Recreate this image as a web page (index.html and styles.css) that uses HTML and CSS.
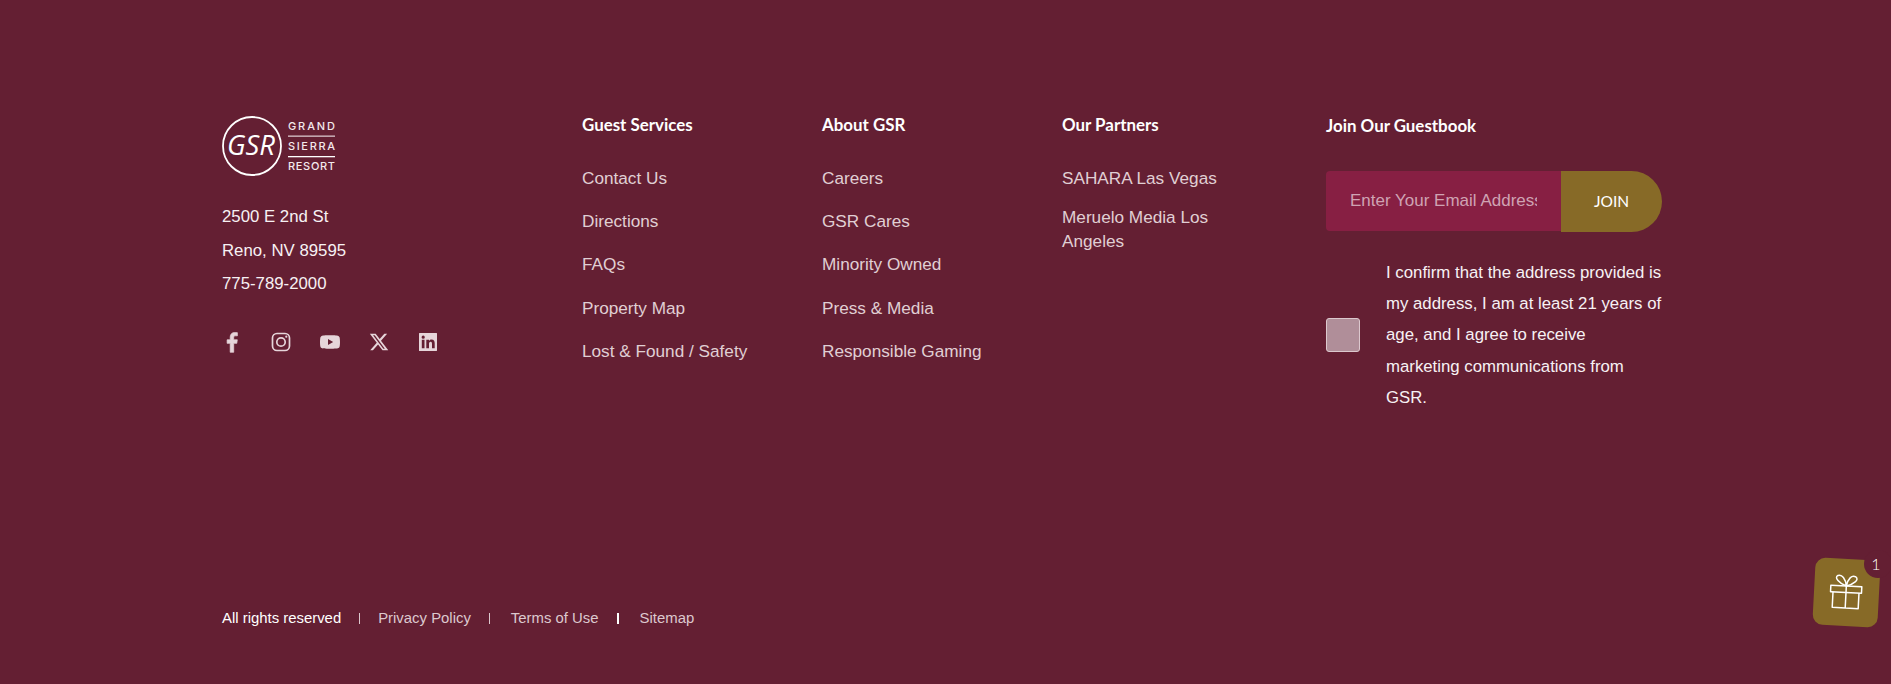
FILE: index.html
```html
<!DOCTYPE html>
<html lang="en">
<head>
<meta charset="utf-8">
<title>GSR Footer</title>
<link rel="stylesheet" href="styles.css">
</head>
<body>
<footer class="footer">
  <div class="main">
    <div class="brand">
      <svg class="logo" width="116" height="60" viewBox="0 0 116 60" role="img" aria-label="Grand Sierra Resort">
        <circle cx="30" cy="30" r="29" fill="none" stroke="#fff" stroke-width="1.800"/>
        <text class="logo-gsr" x="5" y="39" textLength="48" lengthAdjust="spacingAndGlyphs">GSR</text>
        <text class="logo-word" x="66" y="14" textLength="47" lengthAdjust="spacing">GRAND</text>
        <rect x="66" y="19.500" width="47" height="1.300" fill="#d9c5cb"/>
        <text class="logo-word" x="66" y="34" textLength="47" lengthAdjust="spacing">SIERRA</text>
        <rect x="66" y="40" width="47" height="1.300" fill="#fff"/>
        <text class="logo-word" x="66" y="54" textLength="47" lengthAdjust="spacing">RESORT</text>
      </svg>
      <address class="address">
        <p>2500 E 2nd St</p>
        <p>Reno, NV 89595</p>
        <p>775-789-2000</p>
      </address>
      <div class="social">
        <svg class="icon icon-bold" viewBox="-2 -2 28 28"><path d="M14 24V13.6h3.6l.6-4.2H14V6.8c0-1.2.4-2 2.100-2h2.200V1.100C17.900 1 16.600.9 15.200.9c-3.200 0-5.300 1.900-5.300 5.400v3.100H6.300v4.200h3.600V24z"/></svg>
        <svg class="icon" viewBox="0 0 24 24"><rect x="3.500" y="3.500" width="17" height="17" rx="4.500" fill="none" stroke="#e6d5da" stroke-width="1.700"/><circle cx="12" cy="12" r="4.200" fill="none" stroke="#e6d5da" stroke-width="1.700"/><circle cx="17.300" cy="6.700" r="1.100"/></svg>
        <svg class="icon" viewBox="-1.200 -1.200 26.400 26.400"><path d="M22.600 7c-.3-1-1-1.800-2-2C18.800 4.500 12 4.500 12 4.500s-6.800 0-8.600.5c-1 .2-1.700 1-2 2C1 8.800 1 12 1 12s0 3.200.4 5c.3 1 1 1.800 2 2 1.800.5 8.600.5 8.600.5s6.800 0 8.600-.5c1-.2 1.700-1 2-2 .4-1.800.4-5 .4-5s0-3.200-.4-5zM9.800 15.200V8.800l5.700 3.200z" fill-rule="evenodd"/></svg>
        <svg class="icon" viewBox="-2 -2 28 28"><path d="M18.200 2.300h3.300l-7.200 8.200 8.500 11.200h-6.700l-5.200-6.800-6 6.800H1.700l7.700-8.800L1.300 2.300h6.800l4.700 6.200zm-1.200 17.500h1.800L7 4.100H5z"/></svg>
        <svg class="icon" viewBox="0 0 24 24"><path fill-rule="evenodd" d="M3.500 3h17c.3 0 .5.200.5.500v17c0 .3-.2.500-.5.500h-17a.5.500 0 0 1-.5-.5v-17c0-.3.200-.5.500-.5zM5.800 9.800v8.500h2.700V9.800zm1.400-4.200a1.600 1.600 0 1 0 0 3.200 1.600 1.600 0 0 0 0-3.200zm3.100 4.200v8.500H13v-4.300c0-1.100.3-2.200 1.600-2.200s1.400 1.200 1.400 2.300v4.200h2.700v-4.700c0-2.300-.5-4-3.200-4-1.300 0-2.100.7-2.500 1.400V9.800z"/></svg>
      </div>
    </div>
    <nav class="col col-guest">
      <h3 class="col-title">Guest Services</h3>
      <ul class="links">
        <li><a>Contact Us</a></li>
        <li><a>Directions</a></li>
        <li><a>FAQs</a></li>
        <li><a>Property Map</a></li>
        <li><a>Lost &amp; Found / Safety</a></li>
      </ul>
    </nav>
    <nav class="col col-about">
      <h3 class="col-title">About GSR</h3>
      <ul class="links">
        <li><a>Careers</a></li>
        <li><a>GSR Cares</a></li>
        <li><a>Minority Owned</a></li>
        <li><a>Press &amp; Media</a></li>
        <li><a>Responsible Gaming</a></li>
      </ul>
    </nav>
    <nav class="col col-partners">
      <h3 class="col-title">Our Partners</h3>
      <ul class="links links-tight">
        <li><a>SAHARA Las Vegas</a></li>
        <li><a>Meruelo Media Los Angeles</a></li>
      </ul>
    </nav>
    <div class="join">
      <h3 class="join-title">Join Our Guestbook</h3>
      <form class="join-form">
        <input class="email" type="text" placeholder="Enter Your Email Address">
        <button class="join-btn" type="button">JOIN</button>
      </form>
      <label class="consent">
        <span class="check"></span>
        <span class="consent-text">I confirm that the address provided is my address, I am at least 21 years of age, and I agree to receive marketing communications from GSR.</span>
      </label>
    </div>
  </div>
  <div class="legal">
    <span class="rights">All rights reserved</span>
    <span class="sep sep-1"></span>
    <a class="legal-link">Privacy Policy</a>
    <span class="sep sep-2"></span>
    <a class="legal-link">Terms of Use</a>
    <span class="sep sep-3"></span>
    <a class="legal-link">Sitemap</a>
  </div>
</footer>
<div class="gift">
  <svg class="gift-icon" width="36" height="36" viewBox="0 0 36 36" fill="none" stroke="#fff" stroke-width="1.500" stroke-linejoin="round">
    <rect x="1.500" y="12" width="31" height="6.500"/>
    <path d="M4 18.500V34h26V18.500M17 12v22"/>
    <path d="M17 12C10 10 4 4 8 2C12 0 16 5 17 12zM17 12C18 5 22 0 26 2.500C30 5 24 10 17 12z"/>
  </svg>
</div>
<div class="badge">1</div>
</body>
</html>
```
FILE: styles.css
```css
* { box-sizing: border-box; }
html, body { margin: 0; padding: 0; }
body {
  width: 1891px;
  height: 684px;
  overflow: hidden;
  background: #641f33;
  font-family: "Liberation Sans", Arial, sans-serif;
  color: #fff;
}
.footer {
  height: 684px;
  padding: 115px 0 0 222px;
  display: flex;
  flex-direction: column;
}
.main { display: flex; align-items: flex-start; height: 486px; }
.brand { width: 360px; padding-top: 1px; }
.logo { display: block; }
.logo-gsr { font-family: "Open Sans", sans-serif; font-style: italic; font-size: 27px; fill: #fff; }
.logo-word { font-family: Inter, sans-serif; font-size: 11px; font-weight: 500; fill: #f3e9ec; }
.address { font-style: normal; margin-top: 24px; font-size: 16.800px; }
.address p { margin: 0; height: 33.600px; line-height: 33.600px; color: #f7f1f3; }
.social { display: flex; gap: 25px; margin: 29px 0 0 -2px; }
.icon { width: 24px; height: 24px; fill: #e6d5da; display: block; }
.icon-bold { stroke: #e6d5da; stroke-width: 0.800px; }
.col { width: 240px; }
.col-partners { width: 264px; }
.col-title { margin: 0; font: 700 16.900px/20px Lato, sans-serif; color: #fff; height: 20px; }
.links { list-style: none; margin: 31px 0 0; padding: 0; font-size: 17.200px; color: #e0cfd4; }
.links li { height: 43.200px; line-height: 24px; }
.links-tight li { height: auto; margin-bottom: 15px; max-width: 190px; }
.join { width: 337px; }
.join-title { margin: 0; font: 700 16.900px/22px Lato, sans-serif; color: #fff; }
.join-form { display: flex; margin-top: 34px; height: 61px; }
.email {
  width: 235px;
  height: 60px;
  border: 0;
  outline: 0;
  border-radius: 4px 0 0 4px;
  background: #871f43;
  padding: 0 24px;
  font: 17px "Liberation Sans", sans-serif;
  color: #e6d5da;
}
.email::placeholder { color: #cfa3b3; opacity: 1; }
.join-btn {
  width: 101px;
  height: 61px;
  border: 0;
  padding: 0 0 2px;
  background: #876a27;
  border-radius: 0 31px 31px 0;
  font: 400 15.500px Lato, sans-serif;
  color: #fff;
}
.consent { display: flex; align-items: center; margin-top: 25px; }
.check {
  width: 34px;
  height: 34px;
  flex: none;
  border: 1px solid #dcc8ce;
  border-radius: 3px;
  background: #b08e99;
}
.consent-text { margin-left: 26px; width: 280px; font-size: 16.800px; line-height: 31.200px; color: #f7f1f3; }
.legal { display: flex; align-items: center; height: 24px; font-size: 14.900px; margin-top: 5px; }
.rights { color: #fff; }
.legal-link { color: #dcc8ce; }
.sep { width: 1px; height: 11px; background: #dcc8ce; margin: 0 18px; }
.sep-2 { margin: 0 21px 0 18px; }
.sep-3 { width: 2px; background: #fff; margin: 0 21px 0 18px; }
.gift {
  position: absolute;
  left: 1814px;
  top: 559px;
  width: 65px;
  height: 67px;
  padding-bottom: 2px;
  background: #876a27;
  border-radius: 10px;
  transform: rotate(3deg);
  display: flex;
  align-items: center;
  justify-content: center;
}
.badge {
  position: absolute;
  left: 1864px;
  top: 550px;
  width: 28px;
  height: 28px;
  border-radius: 50%;
  background: #641f33;
  color: #fff;
  font: 300 16px/28px Lato, sans-serif;
  text-align: center;
  padding-right: 4px;
}
```
